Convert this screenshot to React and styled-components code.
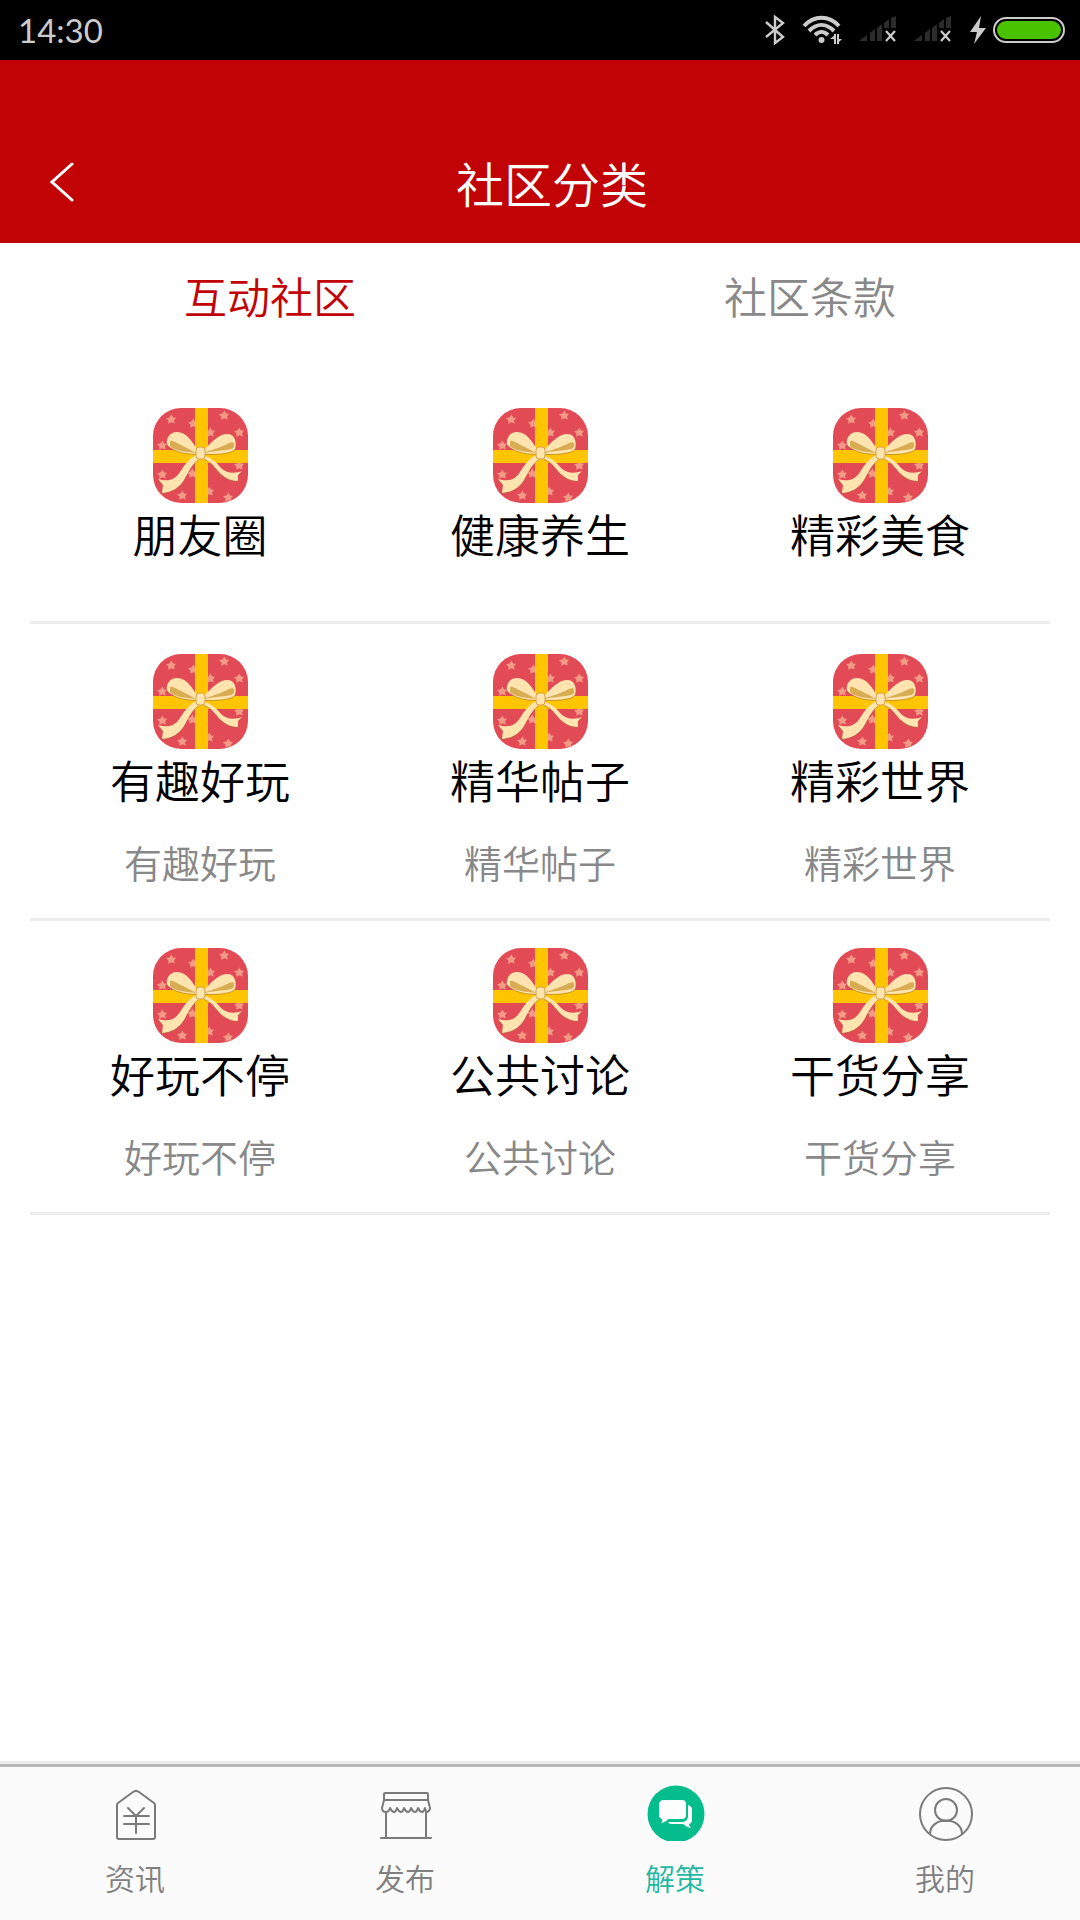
import React from "react";
import styled, { createGlobalStyle } from "styled-components";

const groups = [
  [{ title: "朋友圈" }, { title: "健康养生" }, { title: "精彩美食" }],
  [
    { title: "有趣好玩", desc: "有趣好玩" },
    { title: "精华帖子", desc: "精华帖子" },
    { title: "精彩世界", desc: "精彩世界" },
  ],
  [
    { title: "好玩不停", desc: "好玩不停" },
    { title: "公共讨论", desc: "公共讨论" },
    { title: "干货分享", desc: "干货分享" },
  ],
];

const stars = [
  [18, 11], [40, 15], [71, 7], [57, 24], [86, 24], [9, 37], [86, 57],
  [9, 66], [39, 65], [29, 87], [56, 83], [75, 89],
];

const GiftIcon = () => (
  <GiftSvg viewBox="0 0 95 95" aria-hidden="true">
    <rect width="95" height="95" rx="28" fill="#e24b56" />
    {stars.map(([x, y]) => (
      <path
        key={`${x}-${y}`}
        transform={`translate(${x} ${y})`}
        d="M0.5-4.5L2-1.5L5-1.2L3 1.5L3.8 4.6L0.4 3.3L-2.7 4.8L-2.6 1.5L-5-0.8L-1.6-1.5Z"
        fill="#f39a87"
      />
    ))}
    <path d="M42 0h13v95h-13zM0 42h95v13H0z" fill="#ffc500" />
    <g fill="#a8713a" opacity="0.55" transform="translate(0 1)">
      <path d="M43 47C36 51 32 56 27 64C22 72 15 74 5 71L10 77L9 85C19 84 26 80 31 72C36 63 39 56 46 51Z" />
      <path d="M51 48C58 49 63 54 68 60C73 65 81 66 89 63L85 67L85 73C77 73 70 69 65 63C60 57 57 53 51 51Z" />
      <path d="M44 41C39 34 34 24 24 24C17 24 13 30 14 36C17 42 31 46 44 46Z" />
      <path d="M52 41C59 34 65 26 75 26C82 26 84 35 82 41C77 46 62 46 52 46Z" />
    </g>
    <g fill="#ffe4b0">
      <path d="M43 47C36 51 32 56 27 64C22 72 15 74 5 71L10 77L9 85C19 84 26 80 31 72C36 63 39 56 46 51Z" />
      <path d="M51 48C58 49 63 54 68 60C73 65 81 66 89 63L85 67L85 73C77 73 70 69 65 63C60 57 57 53 51 51Z" />
      <path d="M44 41C39 34 34 24 24 24C17 24 13 30 14 36C17 42 31 46 44 46Z" />
      <path d="M52 41C59 34 65 26 75 26C82 26 84 35 82 41C77 46 62 46 52 46Z" />
    </g>
    <path d="M17 33C19 32 22 34 26 36C32 39 38 42 43 45C32 44 20 42 17 38Z" fill="#d8ac52" />
    <path d="M52 44C60 42 70 38 76 35C79 34 81 34 81 36C82 41 78 41 73 42C66 43 59 43 52 45Z" fill="#d8ac52" />
    <rect x="43" y="39" width="9" height="12" rx="3" fill="#ffe4b0" stroke="#d6a047" />
  </GiftSvg>
);

const BluetoothIcon = () => (
  <svg width="20" height="32" viewBox="0 0 20 32" fill="none" stroke="#ccc" strokeWidth="2.4">
    <path d="M1 8L18 23L10 29V3L18 9L1 23" />
  </svg>
);

const WifiIcon = () => (
  <svg width="40" height="32" viewBox="0 0 40 32" fill="none" stroke="#ccc" strokeWidth="4">
    <path d="M2 12C12 1 27 1 37 12M7 17C15 9 24 9 32 17M13 21C17 17 22 17 26 21" />
    <circle cx="19.500" cy="26" r="3" fill="#ccc" stroke="none" />
    <path d="M33 20V30M36 20V30" strokeWidth="2" />
    <path d="M28 25L34 20V25ZM35 25H40L35 30Z" fill="#ccc" stroke="none" />
  </svg>
);

const SignalIcon = () => (
  <svg width="38" height="28" viewBox="0 0 38 28">
    <path d="M0 25L8 19V25ZM11 17L16 13V25H11ZM18 12L23 8V25H18ZM25 7L30 3V12H25ZM32 2L37 0V12H32Z" fill="#2c2c2c" />
    <path d="M27 15L36 25M36 15L27 25" stroke="#ccc" strokeWidth="2.2" />
  </svg>
);

const BoltIcon = () => (
  <svg width="18" height="30" viewBox="0 0 18 30">
    <path d="M12 1L1 17H8L5 29L17 13H10Z" fill="#ccc" />
  </svg>
);

const BatteryIcon = () => (
  <svg width="72" height="26" viewBox="0 0 72 26">
    <rect x="1" y="1" width="70" height="24" rx="12" fill="none" stroke="#ccc" strokeWidth="2" />
    <rect x="4" y="4" width="64" height="18" rx="9" fill="#49c300" />
  </svg>
);

const BackIcon = () => (
  <svg width="24" height="40" viewBox="0 0 24 40" fill="none" stroke="#fff" strokeWidth="3" strokeLinecap="round">
    <path d="M22 2L2 20L22 38" />
  </svg>
);

const NewsIcon = () => (
  <TabSvg viewBox="-1 0 60 60">
    <path d="M11 24Q11 23 12 22L27 11Q30 9 33 11L48 22Q49 23 49 24V56Q49 58 47 58H13Q11 58 11 56Z" />
    <path d="M22 27L30 35L38 27M30 35V52M18 35H43M18 43H43" />
  </TabSvg>
);

const ShopIcon = () => (
  <TabSvg viewBox="-1 0 60 60">
    <path d="M8 19V13Q8 12 9 12H51Q52 12 52 13V19ZM8 19L6 27Q6 31 10 31Q13 31 14 27Q16 31 18 31Q20 31 21 27Q23 31 25 31Q27 31 28 27Q30 31 32 31Q34 31 35 27Q37 31 39 31Q41 31 42 27Q44 31 46 31Q48 31 49 27Q50 31 51 31Q54 30 54 27L52 19M10 31V57M50 31V57M5 57H55" />
  </TabSvg>
);

const ChatIcon = () => (
  <TabSvg viewBox="-1 0 60 60">
    <circle cx="30" cy="33" r="28.500" fill="#03bd8c" stroke="none" />
    <path d="M18 19H36Q40 19 40 23V34Q40 38 36 38H22Q20 41 15 42Q17 40 16 38Q13 37 13 34V24Q13 19 18 19Z" fill="#fff" stroke="none" />
    <path d="M42 24Q46 25 46 29V39Q46 42 43 43Q43 45 45 47Q40 46 37 43H25Q23 43 22 41H37Q42 40 42 35Z" fill="#fff" stroke="none" />
  </TabSvg>
);

const UserIcon = () => (
  <TabSvg viewBox="-1 0 60 60">
    <circle cx="30" cy="33" r="26" />
    <circle cx="30" cy="29" r="11" />
    <path d="M14 53C14 35 46 35 46 53" />
  </TabSvg>
);

const navItems = [
  { label: "资讯", icon: <NewsIcon /> },
  { label: "发布", icon: <ShopIcon /> },
  { label: "解策", icon: <ChatIcon />, active: true },
  { label: "我的", icon: <UserIcon /> },
];

const App = () => {
  return (
    <Page>
      <GlobalStyle />
      <StatusBar>
        <Clock>14:30</Clock>
        <StatusIcons>
          <BluetoothIcon />
          <WifiIcon />
          <SignalIcon />
          <SignalIcon />
          <Power>
            <BoltIcon />
            <BatteryIcon />
          </Power>
        </StatusIcons>
      </StatusBar>
      <Header>
        <BackButton aria-label="返回">
          <BackIcon />
        </BackButton>
        <Title>社区分类</Title>
      </Header>
      <Tabs>
        <Tab $active>互动社区</Tab>
        <Tab>社区条款</Tab>
      </Tabs>
      <Main>
        {groups.map((items, i) => (
          <Group key={i} $first={i === 0}>
            {items.map((item) => (
              <Item key={item.title} href="#">
                <GiftIcon />
                <ItemTitle>{item.title}</ItemTitle>
                {item.desc && <ItemDesc>{item.desc}</ItemDesc>}
              </Item>
            ))}
          </Group>
        ))}
      </Main>
      <BottomNav>
        {navItems.map((item) => (
          <NavLink key={item.label} href="#" $active={item.active}>
            {item.icon}
            {item.label}
          </NavLink>
        ))}
      </BottomNav>
    </Page>
  );
};

const GlobalStyle = createGlobalStyle`
  * {
    box-sizing: border-box;
  }

  body {
    margin: 0;
    background-color: #fff;
    font-family: "Noto Sans CJK SC", sans-serif;
    font-weight: 350;
  }

  button {
    border: none;
    padding: 0;
    background: none;
    font: inherit;
    cursor: pointer;
  }

  a {
    color: inherit;
    text-decoration: none;
  }

  svg {
    display: block;
  }
`;

const Page = styled.div`
  display: flex;
  flex-direction: column;
  min-height: 100vh;
`;

const StatusBar = styled.div`
  display: flex;
  align-items: center;
  justify-content: space-between;
  height: 60px;
  padding: 0 15px 0 18px;
  background-color: #000;
  color: #ccc;
`;

const Clock = styled.span`
  font-family: Lato, sans-serif;
  font-size: 33px;
  font-weight: 400;
`;

const StatusIcons = styled.div`
  display: flex;
  align-items: center;
  gap: 17px;
`;

const Power = styled.div`
  display: flex;
  align-items: center;
  gap: 6px;
`;

const Header = styled.header`
  display: flex;
  align-items: center;
  height: 183px;
  padding: 60px 50px 0;
  background-color: #c20305;
  color: #fff;
`;

const BackButton = styled.button`
  width: 24px;
`;

const Title = styled.h1`
  flex: 1;
  margin: 0;
  font-size: 48px;
  font-weight: 350;
  line-height: 60px;
  text-align: center;
`;

const Tabs = styled.nav`
  display: flex;
`;

const Tab = styled.button`
  flex: 1;
  height: 104px;
  font-size: 43px;
  color: ${(props) => (props.$active ? "#c20305" : "#888")};
`;

const Main = styled.main`
  flex: 1;
  padding: 34px 30px 0;
`;

const Group = styled.div`
  display: grid;
  grid-template-columns: repeat(3, 1fr);
  margin-bottom: ${(props) => (props.$first ? "3px" : "0")};
  padding: 27px 0 ${(props) => (props.$first ? "56px" : "29px")};
  border-bottom: 3px solid #ececec;
`;

const Item = styled.a`
  display: flex;
  flex-direction: column;
  align-items: center;
`;

const GiftSvg = styled.svg`
  width: 95px;
  height: 95px;
`;

const ItemTitle = styled.span`
  font-size: 45px;
  line-height: 62px;
  color: #000;
`;

const ItemDesc = styled.span`
  margin-top: 24px;
  font-size: 38px;
  line-height: 54px;
  color: #888;
`;

const BottomNav = styled.nav`
  display: flex;
  height: 159px;
  border-top: 3px solid #ececec;
  background-color: #fbfbfb;
  box-shadow: inset 0 3px #b7b7b7;
`;

const NavLink = styled.a`
  display: flex;
  flex: 1;
  flex-direction: column;
  align-items: center;
  gap: 14px;
  padding-top: 17px;
  font-size: 30px;
  line-height: 44px;
  color: ${(props) => (props.$active ? "#23b8a4" : "#808080")};
`;

const TabSvg = styled.svg`
  width: 60px;
  height: 60px;
  fill: none;
  stroke: #7b7b7b;
  stroke-width: 2;
  stroke-linecap: round;
  stroke-linejoin: round;
`;

export default App;
